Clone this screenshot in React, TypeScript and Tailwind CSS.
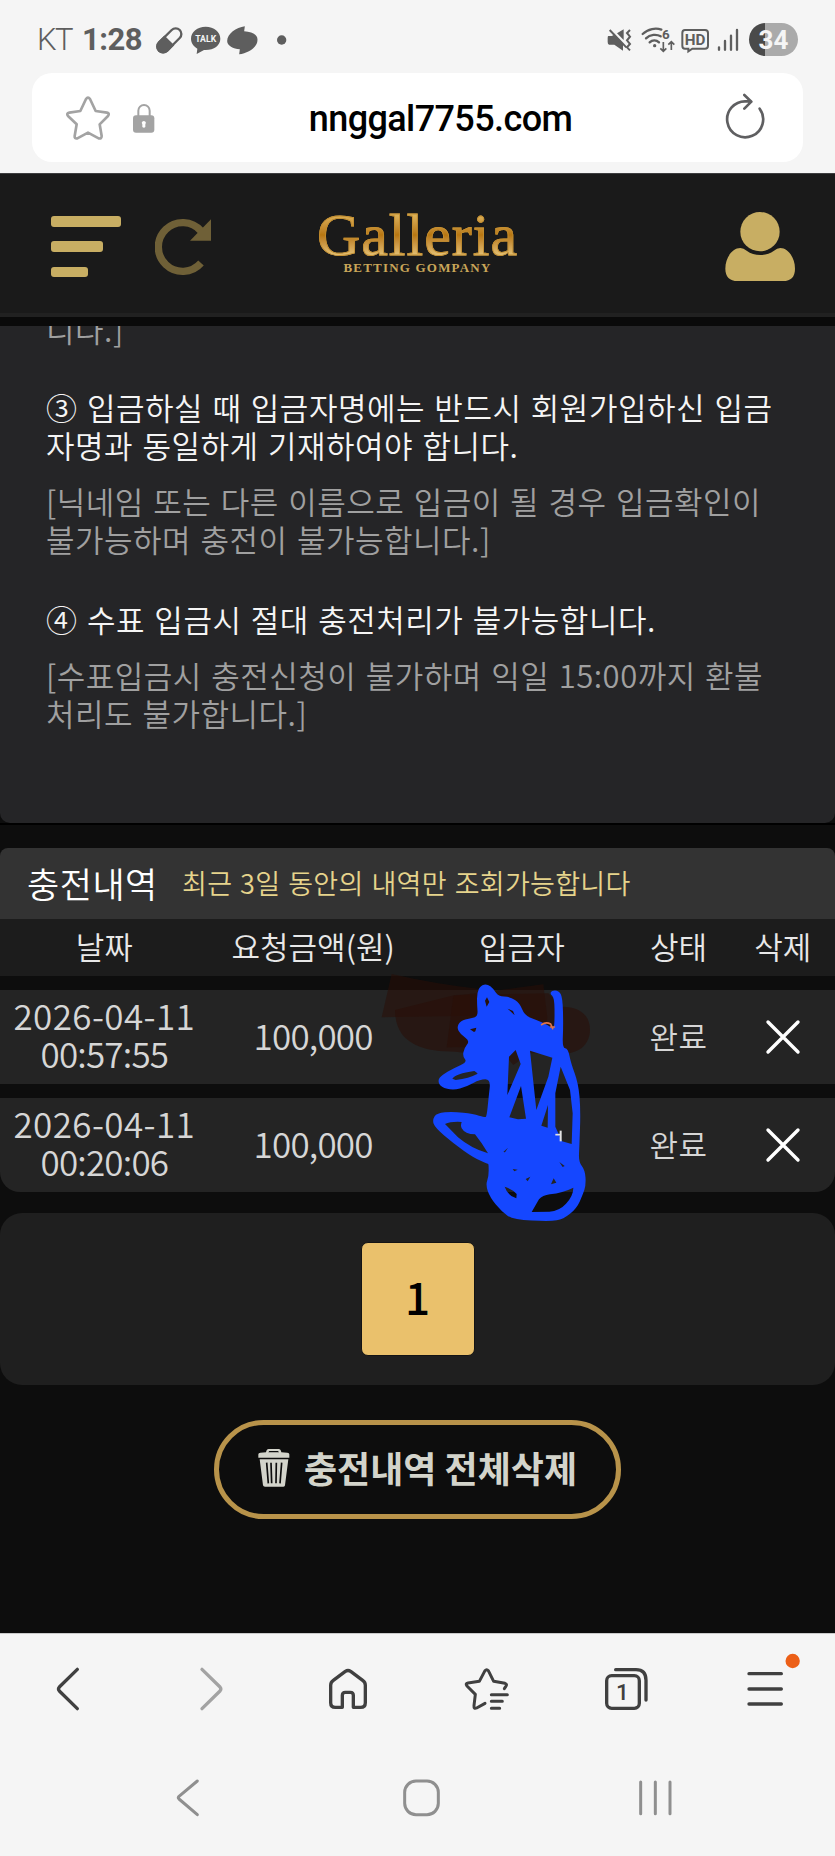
import type { ReactNode } from "react";

const KR = "font-['Noto_Sans_CJK_KR','Noto_Sans',sans-serif]";

function StatusBar() {
  return (
    <div className="flex h-[73px] items-center justify-between pt-[6px] font-[Roboto,sans-serif] text-[#5e5e5e]">
      <div className="flex items-center pl-[37px]">
        <span className="w-[45px] text-[31px] leading-none font-light tracking-[-1.5px]">KT</span>
        <span className="w-[72px] text-[31px] leading-none font-bold tracking-[-0.5px]">1:28</span>
        <svg className="h-[40px] w-[35px]" viewBox="465 58 105 120">
          <g transform="rotate(45 511 119)">
            <rect x="494" y="75" width="34" height="88" rx="17" fill="none" stroke="#5e5e5e" strokeWidth="7" />
            <path d="M490 119h42v26a21 21 0 0 1-42 0z" fill="#5e5e5e" />
          </g>
        </svg>
        <svg className="h-[40px] w-[34px]" viewBox="570 58 102 120">
          <path d="M620 78c-25 0-44 16-44 36 0 13 8 23 19 30l-2 16 22-12h5c25 0 44-14 44-34s-19-36-44-36z" fill="#5e5e5e" />
          <text x="620" y="125" textAnchor="middle" fontSize="28" fontWeight="700" fill="#f5f5f5" textLength="63" lengthAdjust="spacingAndGlyphs">TALK</text>
        </svg>
        <svg className="h-[40px] w-[43px]" viewBox="672 58 128 120">
          <path d="M737 77c-26 4-53 22-53 44 0 14 18 23 38 25l-2 15c26-4 55-20 55-44 0-16-18-24-40-25z" fill="#5e5e5e" />
        </svg>
        <svg className="h-[40px] w-[24px]" viewBox="800 58 72 120">
          <circle cx="847" cy="118" r="14" fill="#5e5e5e" />
        </svg>
      </div>
      <div className="flex items-center pr-[37px]">
        <svg className="h-[40px] w-[34px]" viewBox="573 58 102 120" fill="#5e5e5e">
          <path d="M580 106h10l8-4 26 26v22l-26-18h-16q-4-2-4-8v-12q0-6 2-6zM606 98l20-12v32z" />
          <path d="M584 88l50 52" stroke="#5e5e5e" strokeWidth="6" fill="none" />
          <path d="M645 88l-9 9 9 11-9 11 9 11-9 10 9 9" stroke="#5e5e5e" strokeWidth="6" fill="none" />
        </svg>
        <svg className="h-[40px] w-[39px]" viewBox="675 58 117 120" fill="none" stroke="#5e5e5e" strokeWidth="7">
          <path d="M683 100c16-16 40-19 56-13M693 113c12-12 32-13 44-6M704 125c8-8 20-8 28 0" strokeLinecap="round" />
          <circle cx="719" cy="135" r="5" fill="#5e5e5e" stroke="none" />
          <path d="M745 124v28m-9-9l9 9 9-9M769 148v-25m-9 9l9-9 9 9" strokeWidth="5" />
          <text x="741" y="114" fontSize="40" fontWeight="700" fill="#5e5e5e" stroke="none">6</text>
        </svg>
        <svg className="h-[40px] w-[34px]" viewBox="790 58 102 120" fill="none" stroke="#5e5e5e" strokeWidth="6">
          <path d="M808 88h60q9 0 9 9v38q0 9-9 9h-38l-12 8v-8h-10q-8 0-8-9V97q0-9 8-9z" />
          <text x="838" y="132" textAnchor="middle" fontSize="46" fontWeight="700" fill="#5e5e5e" stroke="none" textLength="62" lengthAdjust="spacingAndGlyphs">HD</text>
        </svg>
        <svg className="h-[40px] w-[36px]" viewBox="892 58 108 120" stroke="#5e5e5e" strokeWidth="7" strokeLinecap="round">
          <path d="M910 140v7M928 121v26M946 105v42M964 88v59" />
        </svg>
        <div className="flex h-[33px] w-[49px] items-center justify-center rounded-full bg-linear-to-r from-[#4a4a4a] from-33% to-[#aaaaaa] to-33%">
          <span className="text-[26px] leading-none font-bold text-[#f5f5f5]">34</span>
        </div>
      </div>
    </div>
  );
}

function AddressBar() {
  return (
    <div className="mx-[32px] flex h-[89px] items-center justify-between rounded-[20px] bg-white">
      <div className="flex items-center pl-[32px]">
        <svg className="h-[50px] w-[52px]" viewBox="192 277 156 150" fill="none" stroke="#a3a3a3" strokeWidth="8" strokeLinejoin="round">
          <path d="M258 295q6-8 12 0l17 36 34 5q9 2 3 10l-25 25 6 35q0 9-9 7l-32-17-32 17q-9 2-8-7l6-35-26-25q-6-8 4-10l33-5z" />
        </svg>
        <svg className="h-[50px] w-[46px]" viewBox="348 277 138 150">
          <path d="M415 350v-20a17 17 0 0 1 34 0v20" fill="none" stroke="#a3a3a3" strokeWidth="6" />
          <rect x="399" y="344" width="64" height="52" rx="9" fill="#a3a3a3" />
          <path d="M427 371a6 6 0 1 1 9 0v8q-4 4-9 0z" fill="#fff" />
        </svg>
      </div>
      <span className="mr-px pt-[2px] font-[Roboto,sans-serif] text-[36px] leading-none font-medium tracking-[-0.6px] text-black">nnggal7755.com</span>
      <svg className="mr-[31px] h-[60px] w-[52px]" viewBox="918 262 156 180" fill="none" stroke="#5f5f61" strokeWidth="8" strokeLinecap="round" strokeLinejoin="round">
        <path d="M1037 324a54 54 0 1 1-41-22h15M991 283l21 20-21 21" />
      </svg>
    </div>
  );
}

function SiteHeader() {
  return (
    <header className="flex h-[144px] items-center justify-between border-t border-b-4 border-t-[#3e3e40] border-b-[#212121] bg-[#1a1a1a] pt-[5px]">
      <div className="flex items-center pl-[51px]">
        <div className="flex h-[62px] w-[104px] flex-col justify-between pt-px">
          <div className="h-[10.500px] w-[70px] rounded-[3px] bg-[#c8ae63]" />
          <div className="h-[10.500px] w-[52px] rounded-[3px] bg-[#c8ae63]" />
          <div className="h-[10.500px] w-[37px] rounded-[3px] bg-[#c8ae63]" />
        </div>
        <svg className="h-[60px] w-[60px]" viewBox="465 139 180 180">
          <path d="M603 280a73 73 0 1 1 0-96" fill="none" stroke="#6f6037" strokeWidth="22" />
          <path d="M633 149v64h-63z" fill="#6f6037" />
        </svg>
      </div>
      <div className="mr-[105px] flex flex-col items-center pb-[8px] font-['Liberation_Serif',serif]">
        <span className="bg-linear-to-b from-[#e6c36a] via-[#b8770f] to-[#eed58a] bg-clip-text text-[60px] leading-[52px] tracking-[1px] text-transparent [-webkit-text-stroke:0.8px_#c58f30]">Galleria</span>
        <span className="text-[13px] leading-[14px] font-bold tracking-[1.2px] text-[#c9a659]">BETTING GOMPANY</span>
      </div>
      <svg className="mr-[38px] h-[72px] w-[72px]" viewBox="932 120 216 216" fill="#c8ae63">
        <circle cx="1037" cy="185" r="59" />
        <path d="M978 234q10 0 19 8 18 13 41 13t41-13q9-8 19-8c24 0 44 30 44 62 0 24-12 37-36 37H970c-24 0-37-13-37-37 0-32 20-62 45-62z" />
      </svg>
    </header>
  );
}

function NoticePanel() {
  return (
    <section className={`${KR} h-[497px] overflow-hidden rounded-b-[10px] bg-[#252527] pl-[46px] text-[31px] leading-[38px] font-[350] tracking-[0.5px] [word-spacing:2px] whitespace-nowrap`}>
      <p className="-mt-[16px] text-[#a0a0a0]">니다.]</p>
      <p className="mt-[40px] text-[#f5f5f5]">
        ③ 입금하실 때 입금자명에는 반드시 회원가입하신 입금
        <br />
        자명과 동일하게 기재하여야 합니다.
      </p>
      <p className="mt-[18px] text-[#a0a0a0]">
        [닉네임 또는 다른 이름으로 입금이 될 경우 입금확인이
        <br />
        불가능하며 충전이 불가능합니다.]
      </p>
      <p className="mt-[42px] text-[#f5f5f5]">④ 수표 입금시 절대 충전처리가 불가능합니다.</p>
      <p className="mt-[18px] text-[#a0a0a0]">
        [수표입금시 충전신청이 불가하며 익일 15:00까지 환불
        <br />
        처리도 불가합니다.]
      </p>
    </section>
  );
}

const COLS = "grid grid-cols-[2fr_2fr_2fr_1fr_1fr] items-center text-center";

const records = [
  { date: "2026-04-11", time: "00:57:55", amount: "100,000" },
  { date: "2026-04-11", time: "00:20:06", amount: "100,000" },
];

function History() {
  return (
    <section className={`${KR} mt-[23px] font-[350]`}>
      <div className="flex h-[71px] items-center rounded-t-[8px] bg-[#333333] pb-[3px] pl-[27px]">
        <h2 className="w-[155px] text-[35px] leading-none tracking-[0.5px] text-white">충전내역</h2>
        <p className="text-[27px] leading-none tracking-[0.3px] [word-spacing:1.5px] text-[#e6d48c]">최근 3일 동안의 내역만 조회가능합니다</p>
      </div>
      <div className={`${COLS} h-[57px] bg-[#1c1c1c] pb-[4px] text-[31px] leading-none text-[#e8e8e8]`}>
        <span>날짜</span>
        <span>요청금액(원)</span>
        <span>입금자</span>
        <span>상태</span>
        <span>삭제</span>
      </div>
      {records.map((r) => (
        <div key={r.time} className={`${COLS} mt-[14px] h-[94px] bg-[#242424] text-[#d6d6d6] last:rounded-b-[20px]`}>
          <span className="pb-[6px] text-[35px] leading-[38px] tracking-[-0.8px]">
            <span className="tracking-[0.4px]">{r.date}</span>
            <br />
            {r.time}
          </span>
          <span className="pb-[6px] text-[35px] leading-none tracking-[-0.8px]">{r.amount}</span>
          <span />
          <span className="pb-[4px] text-[31px] leading-none tracking-[0.4px]">완료</span>
          <button className="flex justify-center" aria-label="삭제">
            <svg className="h-[36px] w-[36px]" viewBox="0 0 36 36" stroke="#fff" strokeWidth="3.400" strokeLinecap="round">
              <path d="M3 3l30 30M33 3L3 33" />
            </svg>
          </button>
        </div>
      ))}
    </section>
  );
}

type Pt = [number, number];

/** Closed curve that runs through the middle of every edge of the polygon. */
function smooth(pts: Pt[]): string {
  const mid = (a: Pt, b: Pt) => `${(a[0] + b[0]) / 2} ${(a[1] + b[1]) / 2}`;
  let d = `M${mid(pts[pts.length - 1], pts[0])}`;
  pts.forEach((p, i) => {
    d += `Q${p[0]} ${p[1]} ${mid(p, pts[(i + 1) % pts.length])}`;
  });
  return `${d}Z`;
}

const inkOutline: Pt[] = [
  [321, 135], [321, 98], [332, 76], [352, 72], [370, 86], [385, 109], [420, 110], [450, 130], [463, 166],
  [500, 180], [530, 193], [551, 208], [554, 180], [553, 112], [540, 102], [545, 91], [566, 92], [578, 112],
  [580, 200], [577, 264], [594, 266], [603, 310], [625, 370], [632, 450], [628, 560], [626, 606], [645, 630], [648, 675],
  [638, 705], [620, 745], [580, 778], [540, 784], [430, 779], [395, 755], [360, 712], [347, 675], [356, 650],
  [356, 613], [354, 612], [310, 593], [250, 550], [195, 503], [187, 480], [200, 459], [250, 455], [310, 462], [344, 472], [350, 470],
  [356, 410], [362, 358], [330, 358], [290, 380], [250, 391], [213, 382], [203, 362], [215, 345], [250, 325], [292, 306], [278, 290],
  [282, 265], [300, 242], [272, 224], [260, 202], [272, 182], [300, 175], [324, 170],
];

const inkHoles =
  "M345 122l6-10 7 14-8 14zM300 208l19-5-3 11-4 2zM413 146l16 7 5 13zM247 356q10-15 66-23 6 3 10 8-26 14-66 19z" +
  "M417 290l20-20 15 42-40 93zM453 378l-35 94 26 6 24-2zM480 272l67 21-12 57-36 100zM534 435l-20 62 19 6z" +
  "M572 320l-16 80v100l20 44 29 8 3-92-8-70zM225 492q18-8 50-6-4 10 0 19 10 18 40 18l20 27 19 30q-50-14-90-48z" +
  "M485 756l22-38q10-12 33-15 38-4 70-20 0 24-22 48-20 22-50 24zM404 680q24 8 36 22l-1 13q-26-8-35-35z" +
  "M428 627l15 2-10 5zM467 657l14-7-8 14zM543 673l8-18 8 13zM568 606l16 12-6 3zM400 576l14-13-9 14z";

function Scribble() {
  return (
    <svg className="pointer-events-none absolute top-[787px] left-[370px] h-[280px] w-[240px] overflow-visible" viewBox="0 0 720 840" fill="none" strokeLinecap="round" strokeLinejoin="round">
      <g fill="#2a0f08">
        <path d="M65 42q130 30 265 45l-10 80-285 5z" opacity=".55" />
        <path d="M75 150l180-45 280-5 40 40c60 0 85 30 85 70s-30 70-75 70h-105l-50 35-30-35q-60 5-145-5c-90 0-180-20-180-125z" opacity=".6" />
        <path d="M250 108l270-35 12 100-20 85-282 4z" opacity=".55" />
      </g>
      <path d={smooth(inkOutline) + inkHoles} fill="#1547ff" fillRule="evenodd" />
      <path d="M515 194q12-10 27-2l6 14m-6-5h11" stroke="#e0764a" strokeWidth="5" />
      <path d="M556 524h16" stroke="#e4e4e4" strokeWidth="5" strokeLinecap="butt" />
      <path d="M572 512v32" stroke="#e4e4e4" strokeWidth="6" strokeLinecap="butt" />
    </svg>
  );
}

function TrashIcon() {
  return (
    <svg className="h-[38px] w-[32px]" viewBox="176 743 96 114">
      <path d="M177 769v-10q0-4 6-5l17-1q2-10 8-10h30q6 0 8 10l18 1q6 1 6 5v10zM207 753h32l-3-4h-26zM181 774h86l-10 78q0 4-5 4h-55q-5 0-6-4z" fill="#d3d4cb" fillRule="evenodd" />
      <path d="M202 784l5 62M215 784l2 62M231 784l-1 62M247 784l-5 62" stroke="#0d0d0d" strokeWidth="5" />
    </svg>
  );
}

function NavIcon({ box, color = "#404040", children }: { box: string; color?: string; children: ReactNode }) {
  return (
    <span className="flex justify-center">
      <svg className="h-[60px] w-[60px] overflow-visible" viewBox={box} fill="none" stroke={color} strokeWidth="10" strokeLinecap="round" strokeLinejoin="round">
        {children}
      </svg>
    </span>
  );
}

function BottomBars() {
  return (
    <footer className="h-[223px] border-t border-[#c9c9c9] bg-[#f5f5f5] pt-[25px]">
      <nav className="grid grid-cols-6">
        <NavIcon box="118 117 180 180">
          <path d="M230 148l-54 53q-5 6 0 12l54 53" />
        </NavIcon>
        <NavIcon box="536 117 180 180" color="#a3a3a3">
          <path d="M605 148l54 53q5 6 0 12l-54 53" />
        </NavIcon>
        <NavIcon box="954 117 180 180">
          <path d="M1036 154q8-5 16 0l37 28q7 5 7 14v52q0 14-14 14h-22v-36q0-9-9-9h-15q-9 0-9 9v36h-21q-14 0-14-14v-52q0-9 7-14z" />
        </NavIcon>
        <NavIcon box="126 117 180 180">
          <path d="M210 250l-25 14q-9 4-8-7l4-34-25-25q-6-7 3-9l34-5 17-32q5-6 10 0l16 32 34 6q8 3 2 10l-4 6M229 224h48M229 244h33M229 265h25" strokeWidth="9" />
        </NavIcon>
        <NavIcon box="544 117 180 180">
          <rect x="576" y="167" width="98" height="98" rx="15" />
          <path d="M603 149h61q30 0 30 32v59" />
          <text x="623" y="241" textAnchor="middle" fontSize="68" fontWeight="500" fill="#404040" stroke="none" fontFamily="Roboto">1</text>
        </NavIcon>
        <NavIcon box="961 117 180 180">
          <path d="M1003 161h97M1003 207h97M1003 252h97" />
          <circle cx="1134" cy="123" r="21.500" fill="#ec5f17" stroke="none" />
        </NavIcon>
      </nav>
      <nav className="mt-[49px] grid grid-cols-3 pr-[63px] pl-[71px]">
        <NavIcon box="474 444 180 180" color="#8f8f8f">
          <path d="M592 483l-55 46q-4 4 0 8l55 47" strokeWidth="9" />
        </NavIcon>
        <NavIcon box="1173 444 180 180" color="#8f8f8f">
          <rect x="1214" y="483" width="101" height="101" rx="34" strokeWidth="9" />
        </NavIcon>
        <NavIcon box="631 444 180 180" color="#8f8f8f">
          <path d="M678 486v95M722 486v95M766 486v95" strokeWidth="9" />
        </NavIcon>
      </nav>
    </footer>
  );
}

export default function App() {
  return (
    <div className="flex h-[1856px] w-[835px] flex-col overflow-hidden bg-[#f5f5f5]">
      <div className="h-[173px] shrink-0">
        <StatusBar />
        <AddressBar />
      </div>
      <main className="relative h-[1460px] shrink-0 bg-[#0d0d0d]">
        <SiteHeader />
        <div className="border-t-[9px] border-b-2 border-t-[#0a0a0a] border-b-black">
          <NoticePanel />
        </div>
        <History />
        <div className="mt-[21px] flex h-[172px] items-center justify-center rounded-[22px] bg-[#1f1f1f]">
          <span className="flex h-[114px] w-[114px] items-center justify-center rounded-[7px] border border-[#141414] bg-[#eac16c] pb-[7px] font-['Noto_Sans_CJK_KR',sans-serif] text-[44px] leading-none font-medium text-black">1</span>
        </div>
        <div className="mt-[35px] flex justify-center">
          <button className={`${KR} flex h-[99px] w-[407px] items-center justify-center gap-[14px] rounded-full border-[5px] border-[#b8934a] text-[36px] leading-none font-bold text-[#d3d4cb]`}>
            <span className="-mt-[4px]">
              <TrashIcon />
            </span>
            <span className="pb-[5px]">충전내역 전체삭제</span>
          </button>
        </div>
        <Scribble />
      </main>
      <BottomBars />
    </div>
  );
}
